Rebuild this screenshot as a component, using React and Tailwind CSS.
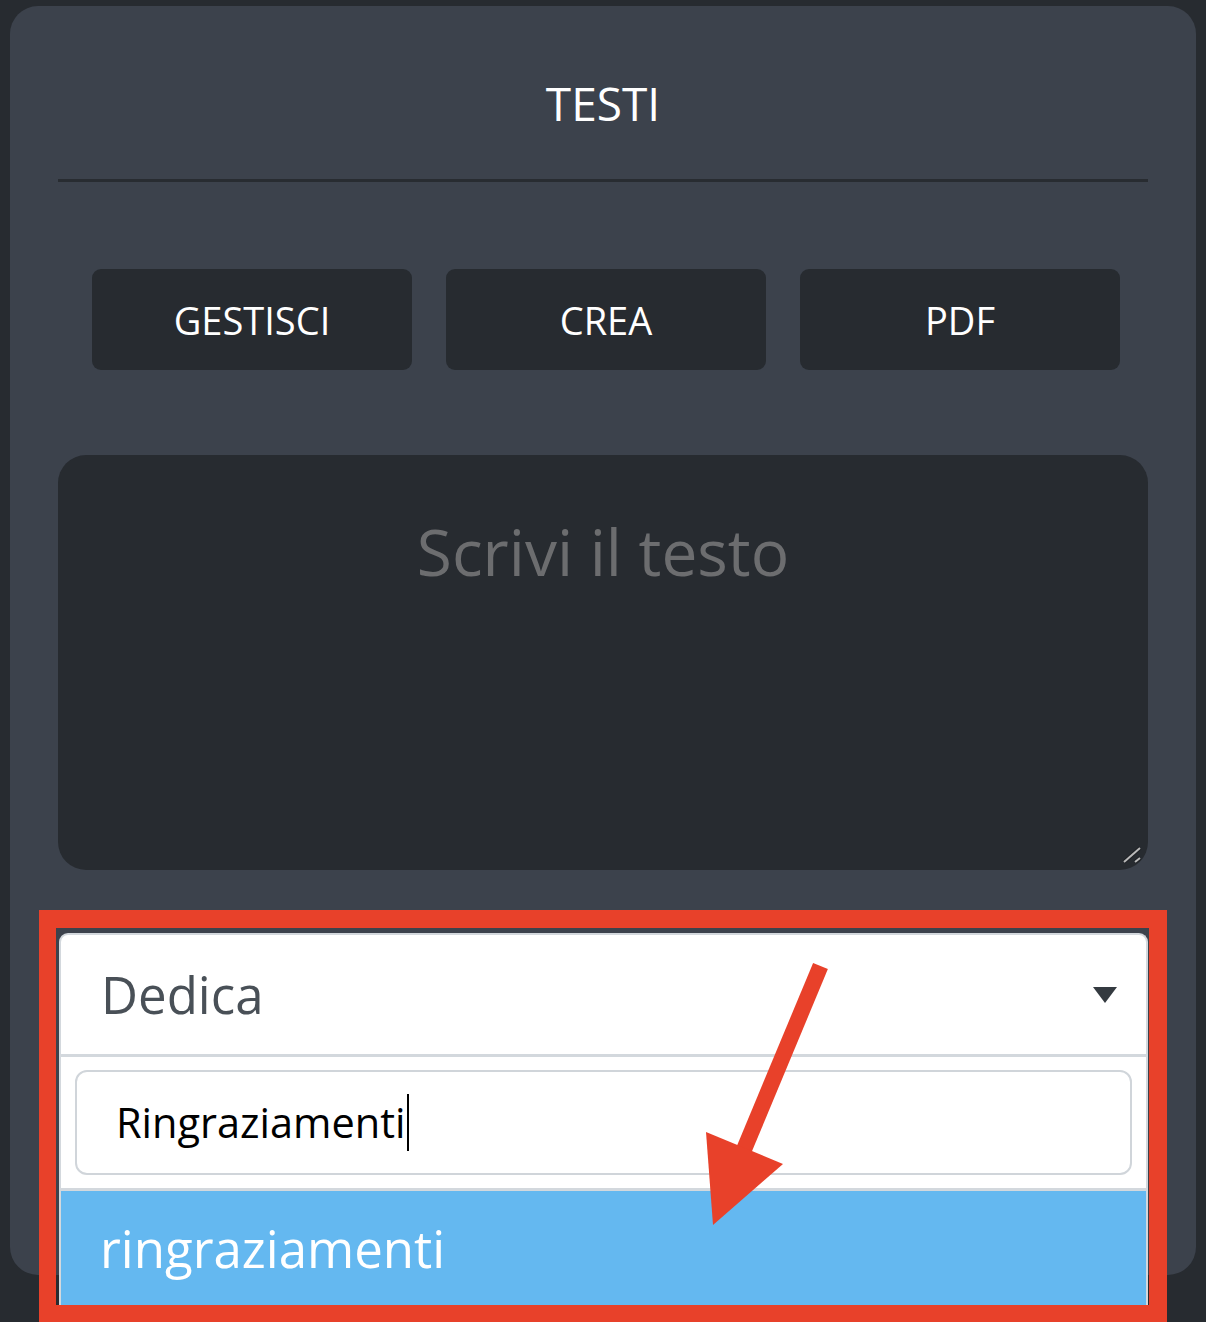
import React from "react";

const font = { fontFamily: '"Open Sans", "Noto Sans", Arial, sans-serif' };

function Btn({ label }) {
  return (
    <div className="w-[320px] h-[101px] rounded-[9px] bg-[#272b30] flex items-center justify-center text-white text-[38px] leading-none">
      {label}
    </div>
  );
}

export default function App() {
  return (
    <div
      className="relative w-[1206px] h-[1322px] overflow-hidden bg-[#272b30]"
      style={font}
    >
      <div className="pt-[6px] pl-[10px]">
        <div className="w-[1186px] h-[1269px] rounded-[28px] bg-[#3c424c] flex flex-col">
          <div className="mt-[65px] h-[64px] flex items-center justify-center text-white text-[46px] leading-[64px]">
            TESTI
          </div>
          <div className="mt-[44px] mx-[48px] h-[3px] bg-[#282c31]" />
          <div className="mt-[87px] pl-[82px] flex gap-[34px]">
            <Btn label="GESTISCI" />
            <Btn label="CREA" />
            <Btn label="PDF" />
          </div>
          <div className="relative mt-[85px] mx-[48px] h-[415px] rounded-[28px] bg-[#272b30] pt-[49px] text-center text-[64px] leading-[96px] text-[#6c6d6f]">
            Scrivi il testo
            <svg
              className="absolute right-[4px] bottom-[5px]"
              width="22"
              height="20"
              viewBox="0 0 22 20"
            >
              <line x1="2" y1="17" x2="18" y2="3" stroke="#1e2125" strokeWidth="4" />
              <line x1="2" y1="17" x2="18" y2="3" stroke="#b9b9b9" strokeWidth="2" />
              <line x1="13" y1="17" x2="18" y2="13" stroke="#1e2125" strokeWidth="4" />
              <line x1="13" y1="17" x2="18" y2="13" stroke="#b9b9b9" strokeWidth="2" />
            </svg>
          </div>
          <div className="relative mt-[63px] ml-[49px] mr-[48px]">
            <div className="h-[121px] bg-white border-t-2 border-x-2 border-[#d3d8dd] rounded-t-[9px] flex items-center justify-between pl-[40px] pr-[29px]">
              <span className="text-[51px] text-[#495057] leading-none">Dedica</span>
              <svg width="24" height="16" viewBox="0 0 24 16">
                <polygon points="0,0 24,0 12,16" fill="#343a40" />
              </svg>
            </div>
            <div className="absolute left-0 right-0 top-full bg-white border-x-2 border-[#d3d8dd]">
              <div className="border-t-[3px] border-[#d3d8dd] px-[14px] pt-[13px] pb-[13px]">
                <div className="h-[105px] rounded-[12px] border-2 border-[#d0d5da] flex items-center pl-[39px]">
                  <span className="text-[41.5px] text-black leading-none">Ringraziamenti</span>
                  <span className="inline-block w-[2px] h-[57px] bg-black ml-[1px]" />
                </div>
              </div>
              <div className="border-t-[3px] border-[#d3d8dd] h-[160px] bg-[#64b8f0] pl-[39px] pt-[22px] text-white text-[51px] leading-[70px]">
                ringraziamenti
              </div>
            </div>
          </div>
        </div>
      </div>

      {/* annotation overlay */}
      <div className="absolute left-[39px] top-[910px] w-[1128px] h-[412px] border-t-[18px] border-l-[17px] border-r-[18px] border-b-[17px] border-[#e8412a]" />
      <svg
        className="absolute left-0 top-0 pointer-events-none"
        width="1206"
        height="1322"
        viewBox="0 0 1206 1322"
      >
        <line x1="820.5" y1="966" x2="743" y2="1152" stroke="#e8412a" strokeWidth="16" />
        <polygon points="706,1132 783,1164 713,1225" fill="#e8412a" />
      </svg>
    </div>
  );
}
